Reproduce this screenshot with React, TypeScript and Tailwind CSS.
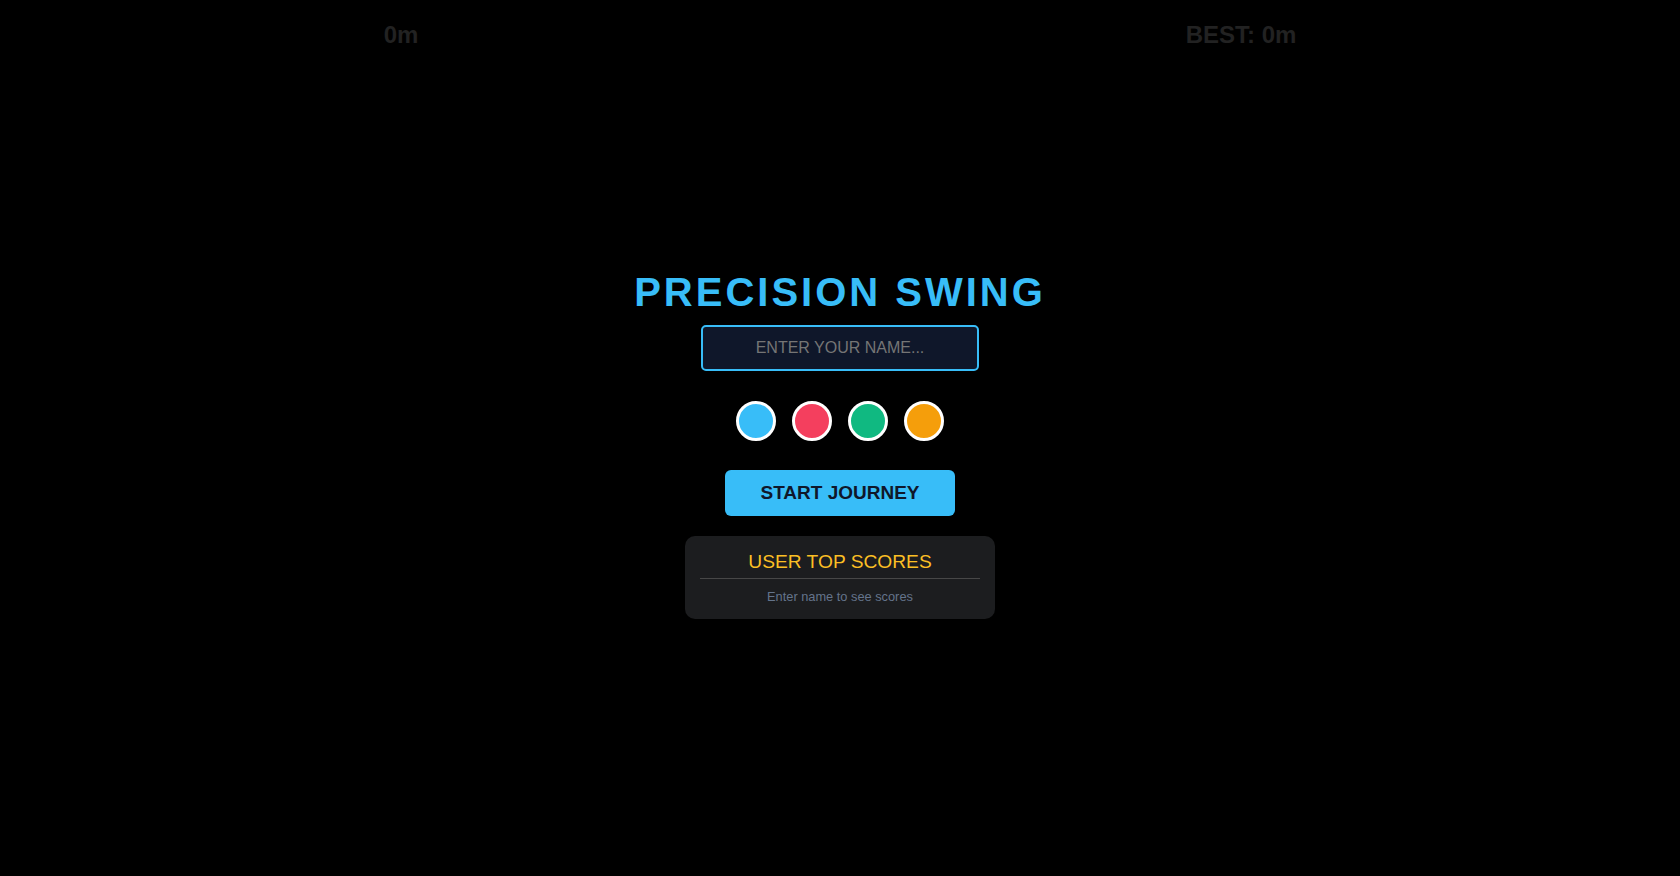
const colors = ['#38bdf8', '#f43f5e', '#10b981', '#f59e0b']

export default function App() {
  return (
    <div className="grid h-screen w-full bg-black font-['Liberation_Sans',Arial,sans-serif]">
      <div className="col-start-1 row-start-1 flex justify-around pt-[21px] text-[24px] leading-[28px] font-bold text-[#222222]">
        <div>0m</div>
        <div>BEST: 0m</div>
      </div>

      <div className="col-start-1 row-start-1 flex flex-col items-center justify-center pt-[12px]">
        <h1 className="mb-[10px] text-[40px] leading-[46px] font-bold tracking-[3px] text-[#38bdf8]">
          PRECISION SWING
        </h1>
        <input
          type="text"
          placeholder="ENTER YOUR NAME..."
          className="h-[46px] w-[278px] rounded-[5px] border-2 border-[#38bdf8] bg-[#0f172a] text-center text-[16px] text-white placeholder:text-[#757575] outline-none"
        />

        <div className="mt-[30px] flex gap-4">
          {colors.map((c) => (
            <div
              key={c}
              className="h-10 w-10 rounded-full border-[3px] border-white"
              style={{ backgroundColor: c }}
            />
          ))}
        </div>

        <button className="mt-[29px] h-[46px] w-[230px] rounded-[6px] bg-[#38bdf8] text-[19px] font-bold text-[#0f172a]">
          START JOURNEY
        </button>

        <div className="mt-[20px] w-[310px] rounded-[10px] bg-[#1c1d1f] p-[15px] text-center">
          <div className="mb-[10px] border-b border-[#474747] pb-[5px] text-[19.2px] leading-[22px] text-[#fbbf24]">
            USER TOP SCORES
          </div>
          <div className="text-[12.8px] leading-[15px] text-[#64748b]">Enter name to see scores</div>
        </div>
      </div>
    </div>
  )
}
